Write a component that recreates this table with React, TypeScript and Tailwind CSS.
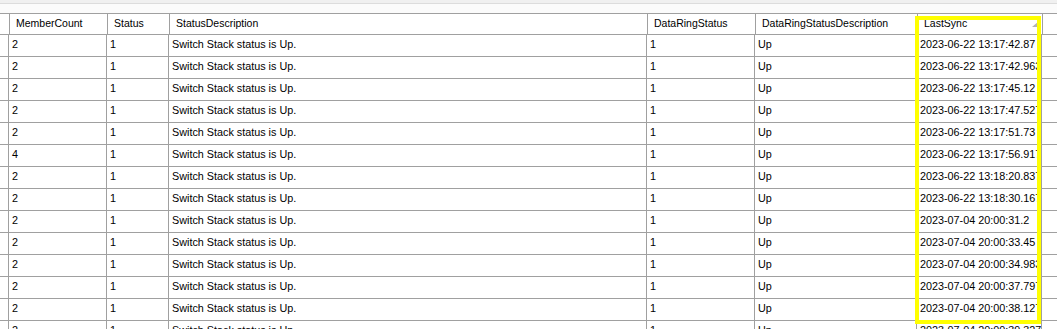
import React from 'react';

const cols = [
  { key: 'rh', label: '', w: 'w-[9px]' },
  { key: 'memberCount', label: 'MemberCount', w: 'w-[98px]' },
  { key: 'status', label: 'Status', w: 'w-[62px]' },
  { key: 'statusDescription', label: 'StatusDescription', w: 'w-[478px]' },
  { key: 'dataRingStatus', label: 'DataRingStatus', w: 'w-[108px]' },
  { key: 'dataRingStatusDescription', label: 'DataRingStatusDescription', w: 'w-[162px]' },
  { key: 'lastSync', label: 'LastSync', w: 'w-[125px]' },
];

const syncs = [
  ['2', '2023-06-22 13:17:42.87'],
  ['2', '2023-06-22 13:17:42.963'],
  ['2', '2023-06-22 13:17:45.12'],
  ['2', '2023-06-22 13:17:47.527'],
  ['2', '2023-06-22 13:17:51.73'],
  ['4', '2023-06-22 13:17:56.917'],
  ['2', '2023-06-22 13:18:20.837'],
  ['2', '2023-06-22 13:18:30.167'],
  ['2', '2023-07-04 20:00:31.2'],
  ['2', '2023-07-04 20:00:33.45'],
  ['2', '2023-07-04 20:00:34.983'],
  ['2', '2023-07-04 20:00:37.797'],
  ['2', '2023-07-04 20:00:38.127'],
  ['2', '2023-07-04 20:00:39.327'],
];

const rows = syncs.map(([count, sync]) => ({
  rh: '',
  memberCount: count,
  status: '1',
  statusDescription: 'Switch Stack status is Up.',
  dataRingStatus: '1',
  dataRingStatusDescription: 'Up',
  lastSync: sync,
}));

const SortGlyph = () => (
  <svg width="7" height="6" viewBox="0 0 7 6" className="shrink-0">
    <polygon points="0,6 7,6 7,0" fill="#b4b4b4" />
  </svg>
);

export default function App() {
  return (
    <div
      className="relative w-[1057px] h-[329px] overflow-hidden bg-white text-black"
      style={{ fontFamily: '"Liberation Sans", Arial, sans-serif' }}
    >
      <div className="h-[3px] bg-[#f0f0f0]" />
      <div className="h-px bg-[#dcdcdc]" />
      <div className="h-[9px] bg-[#fbfbfb]" />

      <div className="border-t border-[#a0a0a0]">
        {/* header */}
        <div className="flex h-[21px] border-b border-[#a0a0a0]">
          {cols.map((c) => (
            <div
              key={c.key}
              className={`${c.w} shrink-0 border-r border-[#a0a0a0] flex items-center justify-between pl-[6px] pr-[3px] pb-[1px] text-[10.5px] whitespace-nowrap overflow-hidden`}
            >
              <span className={c.key === 'rh' ? 'hidden' : ''}>{c.label}</span>
              {c.key === 'lastSync' && <SortGlyph />}
            </div>
          ))}
        </div>

        {/* body */}
        {rows.map((r, i) => (
          <div key={i} className="flex h-[22px] border-b border-[#a0a0a0]">
            {cols.map((c) => (
              <div
                key={c.key}
                className={`${c.w} shrink-0 border-r border-[#a0a0a0] flex items-center pl-[3px] pb-[2px] text-[10.8px] whitespace-nowrap overflow-hidden`}
              >
                {r[c.key as keyof typeof r]}
              </div>
            ))}
          </div>
        ))}
      </div>

      {/* highlight annotation over the LastSync column */}
      <div className="absolute left-[915px] top-[16px] w-[126px] h-[308px] border-4 border-[#ffff00] pointer-events-none" />
    </div>
  );
}
